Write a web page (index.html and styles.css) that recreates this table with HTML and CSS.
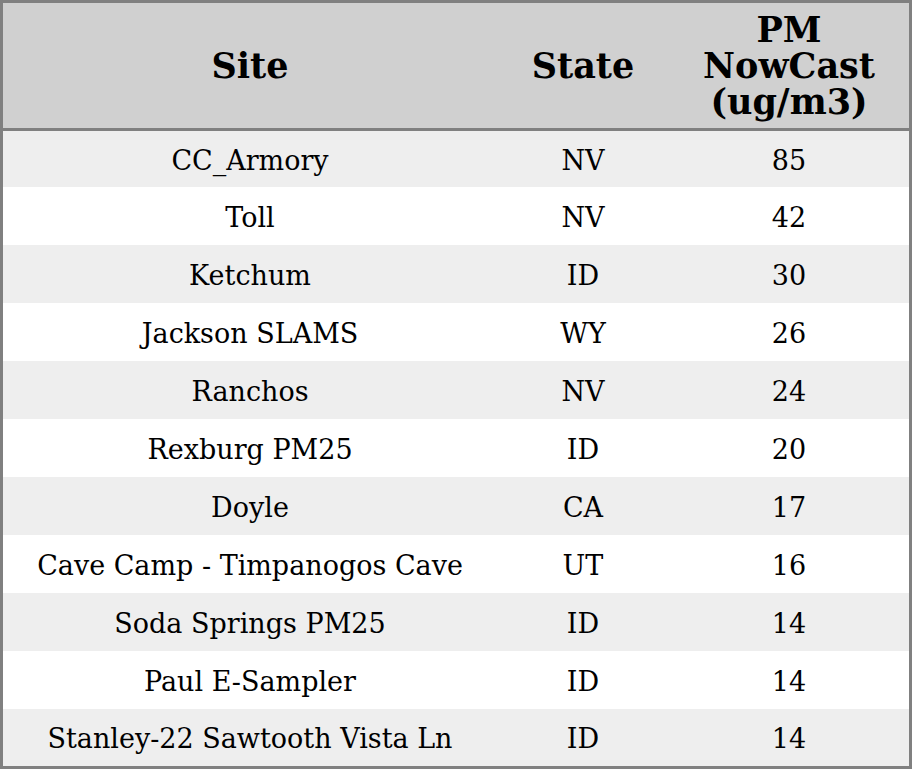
FILE: index.html
```html
<!DOCTYPE html>
<html>
<head>
<meta charset="utf-8">
<link rel="stylesheet" href="styles.css">
</head>
<body>
<table class="aq-table">
  <colgroup>
    <col class="col-site">
    <col class="col-state">
    <col class="col-pm">
  </colgroup>
  <thead>
    <tr class="head-row">
      <th>Site</th>
      <th>State</th>
      <th>PM<br>NowCast<br>(ug/m3)</th>
    </tr>
  </thead>
  <tbody>
    <tr class="row first"><td>CC_Armory</td><td>NV</td><td>85</td></tr>
    <tr class="row"><td>Toll</td><td>NV</td><td>42</td></tr>
    <tr class="row"><td>Ketchum</td><td>ID</td><td>30</td></tr>
    <tr class="row"><td>Jackson SLAMS</td><td>WY</td><td>26</td></tr>
    <tr class="row"><td>Ranchos</td><td>NV</td><td>24</td></tr>
    <tr class="row"><td>Rexburg PM25</td><td>ID</td><td>20</td></tr>
    <tr class="row"><td>Doyle</td><td>CA</td><td>17</td></tr>
    <tr class="row"><td>Cave Camp - Timpanogos Cave</td><td>UT</td><td>16</td></tr>
    <tr class="row"><td>Soda Springs PM25</td><td>ID</td><td>14</td></tr>
    <tr class="row"><td>Paul E-Sampler</td><td>ID</td><td>14</td></tr>
    <tr class="row last"><td>Stanley-22 Sawtooth Vista Ln</td><td>ID</td><td>14</td></tr>
  </tbody>
</table>
</body>
</html>
```
FILE: styles.css
```css
html, body {
  margin: 0;
  padding: 0;
  background: #ffffff;
}
body {
  font-family: "DejaVu Serif", serif;
  color: #000000;
}
.aq-table {
  width: 912px;
  border: 3px solid #808080;
  border-collapse: separate;
  border-spacing: 0;
  table-layout: fixed;
}
.col-site { width: 494px; }
.col-state { width: 172px; }
.col-pm { width: 240px; }
.head-row { height: 128px; }
.head-row th {
  background: #d0d0d0;
  padding: 0;
  font-size: 35px;
  line-height: 36px;
  font-weight: bold;
  text-align: center;
  vertical-align: middle;
  border-bottom: 3px solid #808080;
}
.row { height: 58px; }
.row.first { height: 56px; }
.row.last { height: 57px; }
.row td {
  padding: 3px 0 0 0;
  font-size: 27px;
  line-height: 32px;
  text-align: center;
  vertical-align: middle;
}
.row:nth-child(odd) td { background: #eeeeee; }
.row:nth-child(even) td { background: #ffffff; }
```
